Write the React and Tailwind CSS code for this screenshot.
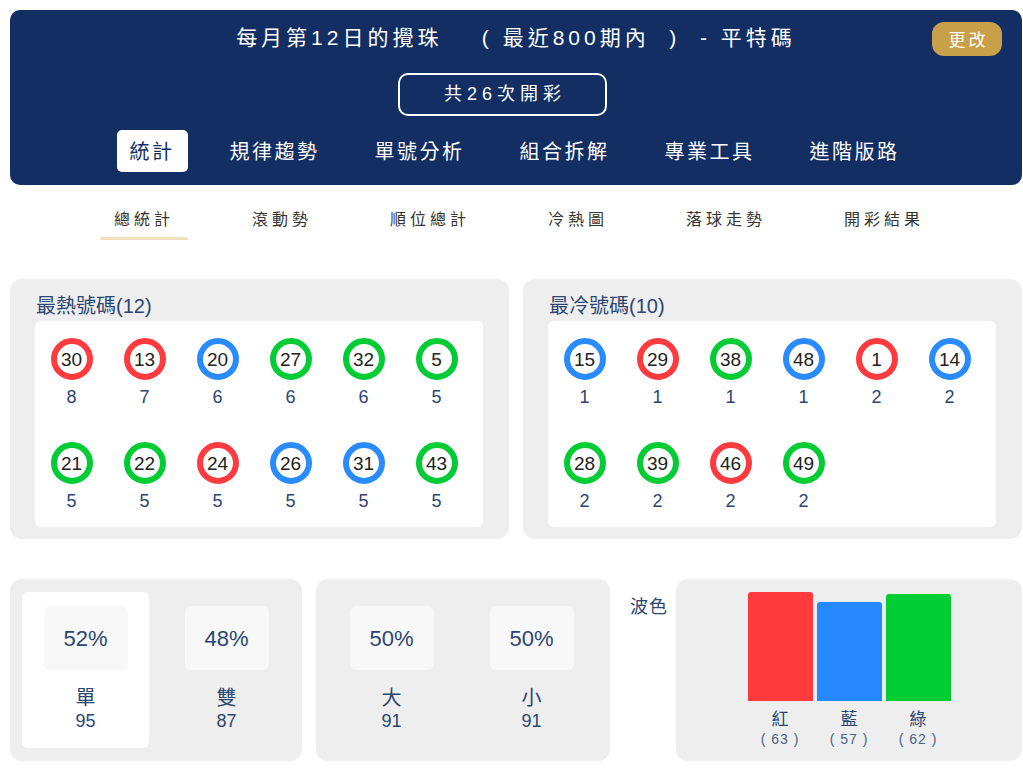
const hot = [
  [30, 'r', 8], [13, 'r', 7], [20, 'b', 6], [27, 'g', 6], [32, 'g', 6], [5, 'g', 5],
  [21, 'g', 5], [22, 'g', 5], [24, 'r', 5], [26, 'b', 5], [31, 'b', 5], [43, 'g', 5],
];
const cold = [
  [15, 'b', 1], [29, 'r', 1], [38, 'g', 1], [48, 'b', 1], [1, 'r', 2], [14, 'b', 2],
  [28, 'g', 2], [39, 'g', 2], [46, 'r', 2], [49, 'g', 2],
];

const ring = { r: 'border-[#ff3b3f]', b: 'border-[#2a8bff]', g: 'border-[#00cc33]' };

const CJK = "font-['Noto_Sans_CJK_TC','Noto_Sans',sans-serif]";
const ARIAL = "font-['Liberation_Sans','Noto_Sans_CJK_TC',sans-serif]";

function Ball({ n, c, count }) {
  return (
    <div className="flex flex-col items-center">
      <div className={`w-[42px] h-[42px] rounded-full border-[6px] ${ring[c]} bg-white flex items-center justify-center`}>
        <span className={`${ARIAL} text-[19px] leading-none text-[#222]`}>{n}</span>
      </div>
      <div className={`${ARIAL} mt-[8px] text-[18px] leading-[18px] text-[#2a4674]`}>{count}</div>
    </div>
  );
}

function BallPanel({ title, items }) {
  return (
    <div className="w-[499px] h-[260px] bg-[#eeeeee] rounded-[12px] pl-[25px] pr-[26px] pt-[14px]">
      <div className={`${ARIAL} text-[20px] leading-[26px] text-[#2a4674] pl-[1px]`}>{title}</div>
      <div className="mt-[2px] bg-white rounded-[6px] h-[206px] pt-[17px]">
        <div className="grid grid-cols-[repeat(6,73px)] gap-y-[36px]">
          {items.map(([n, c, k]) => (
            <Ball key={n} n={n} c={c} count={k} />
          ))}
        </div>
      </div>
    </div>
  );
}

function StatCol({ pct, label, num, active }) {
  return (
    <div className={`w-[127px] h-[156px] rounded-[6px] flex flex-col items-center pt-[14px] ${active ? 'bg-white' : ''}`}>
      <div className="w-[84px] h-[64px] bg-[#f8f8f8] rounded-[6px] flex items-center justify-center">
        <span className={`${ARIAL} text-[22px] text-[#2a4674]`}>{pct}</span>
      </div>
      <div className={`${CJK} mt-[14px] text-[20px] leading-[26px] text-[#2a4674]`}>{label}</div>
      <div className={`${ARIAL} text-[18px] leading-[22px] text-[#2a4674]`}>{num}</div>
    </div>
  );
}

function Bar({ color, h, label, v }) {
  return (
    <div className="flex flex-col items-center w-[65px]">
      <div className="h-[109px] w-full flex items-end">
        <div className={`w-full rounded-t-[3px] ${color}`} style={{ height: h }} />
      </div>
      <div className={`${CJK} mt-[6px] text-[17px] leading-[22px] text-[#2a4674]`}>{label}</div>
      <div className={`${ARIAL} text-[14px] leading-[20px] text-[#4a6285] tracking-[1px]`}>( {v} )</div>
    </div>
  );
}

export default function App() {
  const tabs = ['統計', '規律趨勢', '單號分析', '組合拆解', '專業工具', '進階版路'];
  const subs = ['總統計', '滾動勢', '順位總計', '冷熱圖', '落球走勢', '開彩結果'];
  const max = 63;
  return (
    <div className={`w-[1023px] min-h-[771px] bg-white ${CJK}`}>
      <div className="pl-[10px] pt-[10px] w-[1022px]">
        {/* Header */}
        <div className="relative h-[175px] bg-[#132e62] rounded-[10px] flex flex-col items-center">
          <div className={`${ARIAL} mt-[14px] text-[21px] leading-[28px] tracking-[4px] text-white whitespace-pre`}>
            {'每月第12日的攪珠    ( 最近800期內  )  - 平特碼'}
          </div>
          <button className="absolute right-[20px] top-[12px] w-[70px] h-[34px] rounded-[12px] bg-[#c9a04a] text-white text-[17px] tracking-[3px] pl-[3px] flex items-center justify-center">
            更改
          </button>
          <div className={`${ARIAL} mt-[21px] mr-[27px] w-[209px] h-[43px] border-2 border-white rounded-[10px] flex items-center justify-center text-white text-[18px] tracking-[5px] pl-[5px]`}>
            共26次開彩
          </div>
          <div className="mt-[14px] flex justify-center gap-[29px] mr-[3px]">
            {tabs.map((t, i) => (
              <div
                key={t}
                className={`h-[42px] px-[13px] rounded-[5px] flex items-center text-[20px] tracking-[2.5px] ${i === 0 ? 'bg-white text-[#132e62]' : 'text-white'}`}
              >
                {t}
              </div>
            ))}
          </div>
        </div>

        {/* Sub tabs */}
        <div className="mt-[20px] flex justify-center gap-[50px] pl-[6px]">
          {subs.map((s, i) => (
            <div key={s} className="flex flex-col items-center">
              <div className="px-[14px] text-[16px] leading-[26px] tracking-[4px] text-[#333]">{s}</div>
              <div className={`mt-[6px] h-[3px] w-full rounded-full ${i === 0 ? 'bg-[#efdfbf]' : ''}`} />
            </div>
          ))}
        </div>

        {/* Ball panels */}
        <div className="mt-[39px] flex gap-[14px]">
          <BallPanel title="最熱號碼(12)" items={hot} />
          <BallPanel title="最冷號碼(10)" items={cold} />
        </div>

        {/* Bottom */}
        <div className="mt-[40px] flex">
          <div className="w-[292px] h-[182px] bg-[#eeeeee] rounded-[12px] px-[12px] pt-[13px] flex gap-[14px]">
            <StatCol pct="52%" label="單" num="95" active />
            <StatCol pct="48%" label="雙" num="87" />
          </div>
          <div className="ml-[14px] w-[294px] h-[182px] bg-[#eeeeee] rounded-[12px] px-[12px] pt-[13px] flex gap-[13px]">
            <StatCol pct="50%" label="大" num="91" />
            <StatCol pct="50%" label="小" num="91" />
          </div>
          <div className="w-[66px] pl-[20px] pt-[13px] text-[18px] leading-[26px] tracking-[1px] text-[#2a4674]">波色</div>
          <div className="w-[346px] h-[182px] bg-[#eeeeee] rounded-[12px] pt-[13px] flex justify-center gap-[4px]">
            <Bar color="bg-[#ff3a3d]" h={Math.round((63 / max) * 109)} label="紅" v={63} />
            <Bar color="bg-[#2588ff]" h={Math.round((57 / max) * 109)} label="藍" v={57} />
            <Bar color="bg-[#00cc33]" h={Math.round((62 / max) * 109)} label="綠" v={62} />
          </div>
        </div>
      </div>
    </div>
  );
}
